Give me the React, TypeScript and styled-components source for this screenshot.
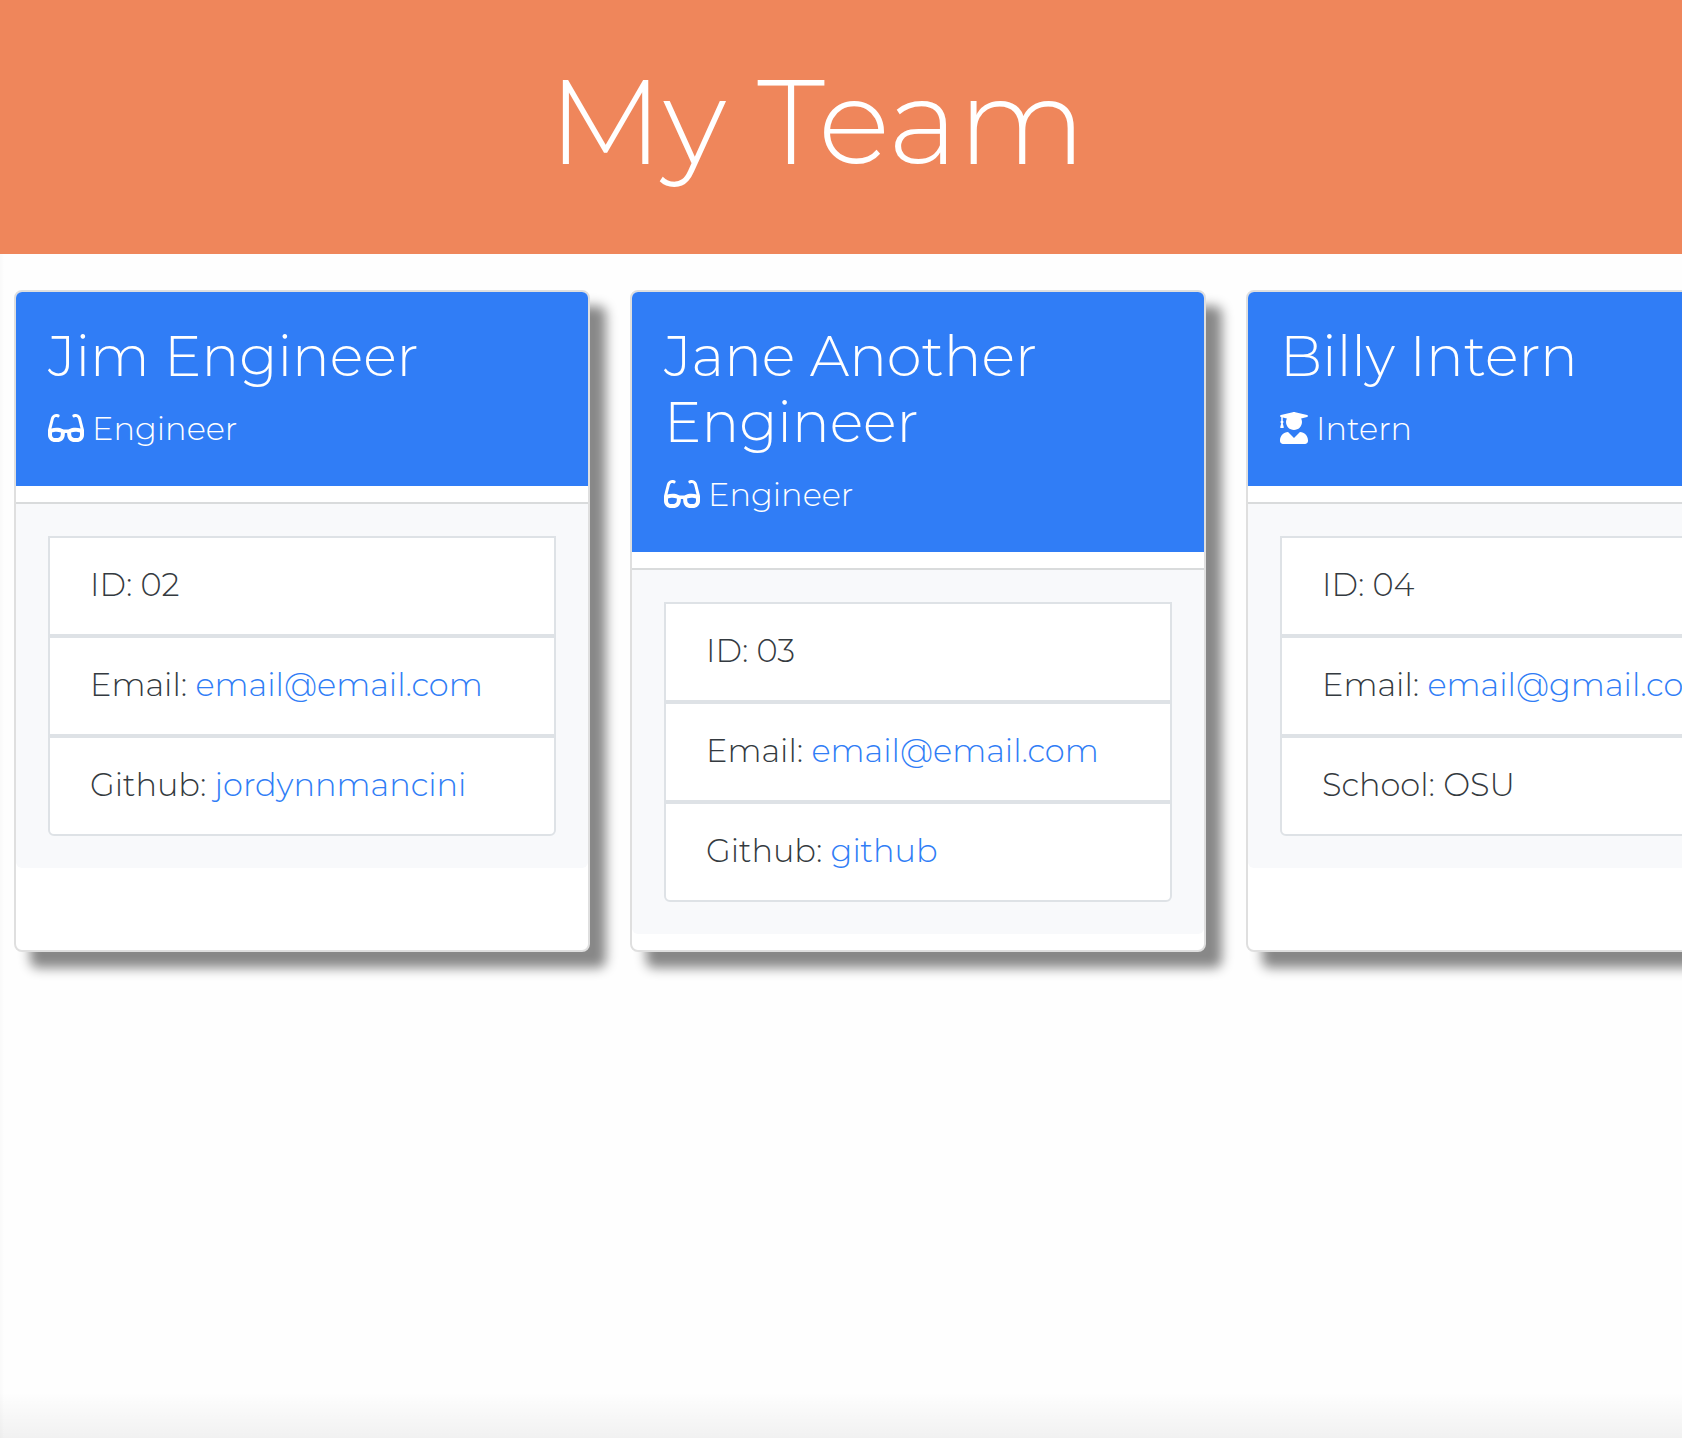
import React from "react";
import styled, { createGlobalStyle } from "styled-components";
import { FaGlasses, FaUserGraduate } from "react-icons/fa";

const GlobalStyle = createGlobalStyle`
  *, *::before, *::after { box-sizing: border-box; }
  body {
    margin: 0;
    color: #343a40;
    background: #ffffff;
    font-family: Montserrat, Inter, "Liberation Sans", sans-serif;
    font-size: 32px;
    font-weight: 300;
    line-height: 48px;
  }
`;

const Page = styled.div`
  min-height: 100vh;
  overflow: hidden;
  background:
    linear-gradient(to right, rgba(0, 0, 0, 0.02), transparent 4px),
    linear-gradient(to top, rgba(0, 0, 0, 0.05), transparent 46px),
    #fefefe;
`;

const Banner = styled.header`
  padding: 49px 48px 61px 0;
  background: #ef865b;
  color: #ffffff;
  text-align: center;
`;

const BannerTitle = styled.h1`
  margin: 0;
  font-size: 120px;
  font-weight: 300;
  line-height: 144px;
`;

const Team = styled.main`
  display: flex;
  align-items: stretch;
  gap: 40px;
  padding: 36px 14px;
`;

const Card = styled.article`
  flex: 0 0 576px;
  min-height: 662px;
  border: 2px solid #dfdfdf;
  border-radius: 8px;
  background: #ffffff;
  box-shadow: 16px 16px 12px #888888;
`;

const CardHeader = styled.header`
  padding: 31px 32px 33px;
  border-radius: 6px 6px 0 0;
  background: #307df6;
  color: #ffffff;
`;

const Name = styled.h2`
  margin: 0 0 16px;
  font-size: 56px;
  font-weight: 300;
  line-height: 66px;
`;

const Role = styled.p`
  display: flex;
  align-items: center;
  gap: 8px;
  margin: 0;
`;

const RoleIcon = styled.span<{ $width: number }>`
  display: flex;
  padding-bottom: 2px;
  svg {
    width: ${(p) => p.$width}px;
    height: 32px;
  }
`;

const CardBody = styled.div`
  margin-top: 16px;
  padding: 32px;
  border-top: 2px solid #d9dbdc;
  border-radius: 0 0 6px 6px;
  background: #f8f9fb;
`;

const Details = styled.ul`
  margin: 0;
  padding: 0;
  list-style: none;
`;

const Detail = styled.li`
  padding: 23px 40px 25px;
  border: 2px solid #dee2e6;
  background: #ffffff;
  white-space: nowrap;
  &:last-child {
    border-radius: 0 0 6px 6px;
  }
`;

const DetailLink = styled.a`
  color: #307df6;
  text-decoration: none;
`;

type Member = {
  name: string;
  role: "Engineer" | "Intern";
  details: { label: string; value: string; href?: string }[];
};

const members: Member[] = [
  {
    name: "Jim Engineer",
    role: "Engineer",
    details: [
      { label: "ID", value: "02" },
      { label: "Email", value: "email@email.com", href: "mailto:email@email.com" },
      { label: "Github", value: "jordynnmancini", href: "#jordynnmancini" },
    ],
  },
  {
    name: "Jane Another Engineer",
    role: "Engineer",
    details: [
      { label: "ID", value: "03" },
      { label: "Email", value: "email@email.com", href: "mailto:email@email.com" },
      { label: "Github", value: "github", href: "#github" },
    ],
  },
  {
    name: "Billy Intern",
    role: "Intern",
    details: [
      { label: "ID", value: "04" },
      { label: "Email", value: "email@gmail.com", href: "mailto:email@gmail.com" },
      { label: "School", value: "OSU" },
    ],
  },
];

function MemberCard({ member }: { member: Member }) {
  const engineer = member.role === "Engineer";
  return (
    <Card>
      <CardHeader>
        <Name>{member.name}</Name>
        <Role>
          <RoleIcon $width={engineer ? 36 : 28} aria-hidden="true">
            {engineer ? <FaGlasses /> : <FaUserGraduate />}
          </RoleIcon>
          {member.role}
        </Role>
      </CardHeader>
      <CardBody>
        <Details>
          {member.details.map((d) => (
            <Detail key={d.label}>
              {d.label}: {d.href ? <DetailLink href={d.href}>{d.value}</DetailLink> : d.value}
            </Detail>
          ))}
        </Details>
      </CardBody>
    </Card>
  );
}

export default function App() {
  return (
    <Page>
      <GlobalStyle />
      <Banner>
        <BannerTitle>My Team</BannerTitle>
      </Banner>
      <Team>
        {members.map((m) => (
          <MemberCard key={m.name} member={m} />
        ))}
      </Team>
    </Page>
  );
}
